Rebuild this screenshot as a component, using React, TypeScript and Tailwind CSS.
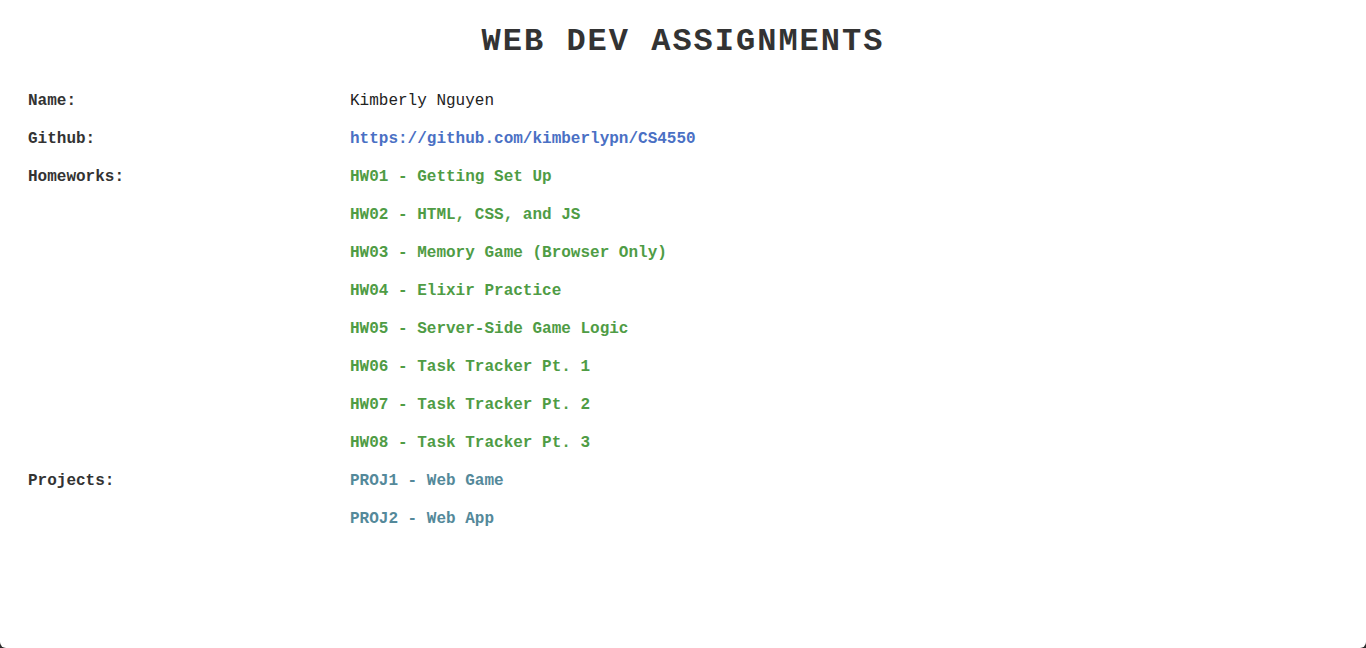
import React from "react";

const homeworks = [
  "HW01 - Getting Set Up",
  "HW02 - HTML, CSS, and JS",
  "HW03 - Memory Game (Browser Only)",
  "HW04 - Elixir Practice",
  "HW05 - Server-Side Game Logic",
  "HW06 - Task Tracker Pt. 1",
  "HW07 - Task Tracker Pt. 2",
  "HW08 - Task Tracker Pt. 3",
];

const projects = ["PROJ1 - Web Game", "PROJ2 - Web App"];

const Row = ({ label, children }: { label?: string; children: React.ReactNode }) => (
  <div className="flex h-[38px] items-center">
    <div className="w-[322px] shrink-0 font-bold text-[#333]">{label}</div>
    <div>{children}</div>
  </div>
);

export default function App() {
  return (
    <div className="h-[648px] bg-[#2b2b2b]">
      <div className="h-full rounded-b-[6px] bg-white font-['Liberation_Mono','Courier_New',monospace] text-[16px]">
        <h1 className="pt-[23px] text-center text-[32px] leading-[38px] font-bold tracking-[2px] text-[#333]">
          WEB DEV ASSIGNMENTS
        </h1>
        <div className="mt-[21px] px-[28px]">
          <Row label="Name:">
            <span className="text-[#222]">Kimberly Nguyen</span>
          </Row>
          <Row label="Github:">
            <a className="font-semibold text-[#4a70c4]">https://github.com/kimberlypn/CS4550</a>
          </Row>
          {homeworks.map((hw, i) => (
            <Row key={hw} label={i === 0 ? "Homeworks:" : undefined}>
              <a className="font-semibold text-[#4f9c45]">{hw}</a>
            </Row>
          ))}
          {projects.map((p, i) => (
            <Row key={p} label={i === 0 ? "Projects:" : undefined}>
              <a className="font-semibold text-[#54899a]">{p}</a>
            </Row>
          ))}
        </div>
      </div>
    </div>
  );
}
